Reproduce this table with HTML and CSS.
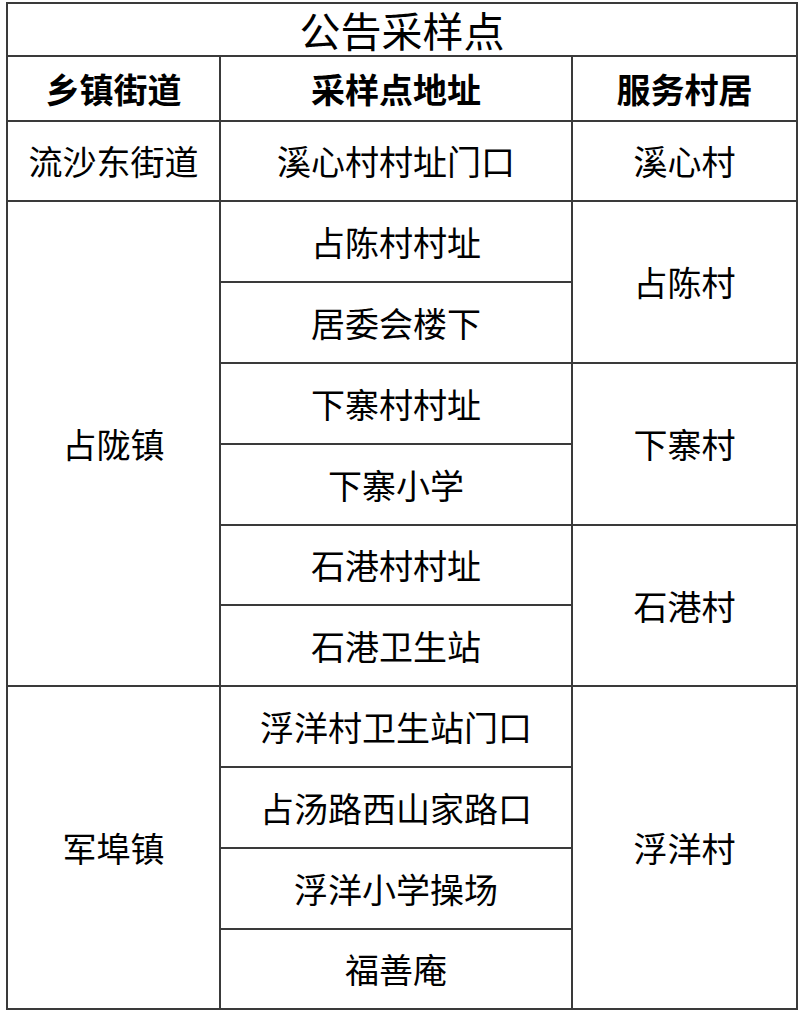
FILE: index.html
```html
<!DOCTYPE html>
<html lang="zh-CN">
<head>
<meta charset="utf-8">
<title>公告采样点</title>
<link rel="stylesheet" href="styles.css">
</head>
<body>
<table class="sheet">
  <colgroup>
    <col class="c1"><col class="c2"><col class="c3">
  </colgroup>
  <tr class="r-title"><td colspan="3" class="title">公告采样点</td></tr>
  <tr class="r-head">
    <th>乡镇街道</th><th>采样点地址</th><th>服务村居</th>
  </tr>
  <tr class="r80">
    <td>流沙东街道</td><td>溪心村村址门口</td><td>溪心村</td>
  </tr>
  <tr class="r81">
    <td rowspan="6">占陇镇</td><td>占陈村村址</td><td rowspan="2">占陈村</td>
  </tr>
  <tr class="r81"><td>居委会楼下</td></tr>
  <tr class="r81"><td>下寨村村址</td><td rowspan="2">下寨村</td></tr>
  <tr class="r81"><td>下寨小学</td></tr>
  <tr class="r80"><td>石港村村址</td><td rowspan="2">石港村</td></tr>
  <tr class="r81"><td>石港卫生站</td></tr>
  <tr class="r81">
    <td rowspan="4">军埠镇</td><td>浮洋村卫生站门口</td><td rowspan="4">浮洋村</td>
  </tr>
  <tr class="r81"><td>占汤路西山家路口</td></tr>
  <tr class="r81"><td>浮洋小学操场</td></tr>
  <tr class="r80"><td>福善庵</td></tr>
</table>
</body>
</html>
```

FILE: styles.css
```css
html, body {
  margin: 0;
  padding: 0;
  background: #ffffff;
}
body {
  padding: 2px 0 0 6px;
  font-family: "Noto Sans CJK SC", "Noto Sans", sans-serif;
  color: #000;
}
.sheet {
  border-collapse: collapse;
  width: 790px;
  table-layout: fixed;
}
.c1 { width: 213px; }
.c2 { width: 352px; }
.c3 { width: 225px; }
.sheet td, .sheet th {
  border: 2px solid #3a3a3a;
  padding: 0;
  text-align: center;
  vertical-align: middle;
  font-size: 34px;
  line-height: 1;
  font-weight: 400;
  white-space: nowrap;
}
.sheet th {
  font-weight: 700;
}
.sheet td.title {
  font-size: 41px;
}
.r-title { height: 53px; }
.r-head { height: 65px; }
.r80 { height: 80px; }
.r81 { height: 81px; }
```
